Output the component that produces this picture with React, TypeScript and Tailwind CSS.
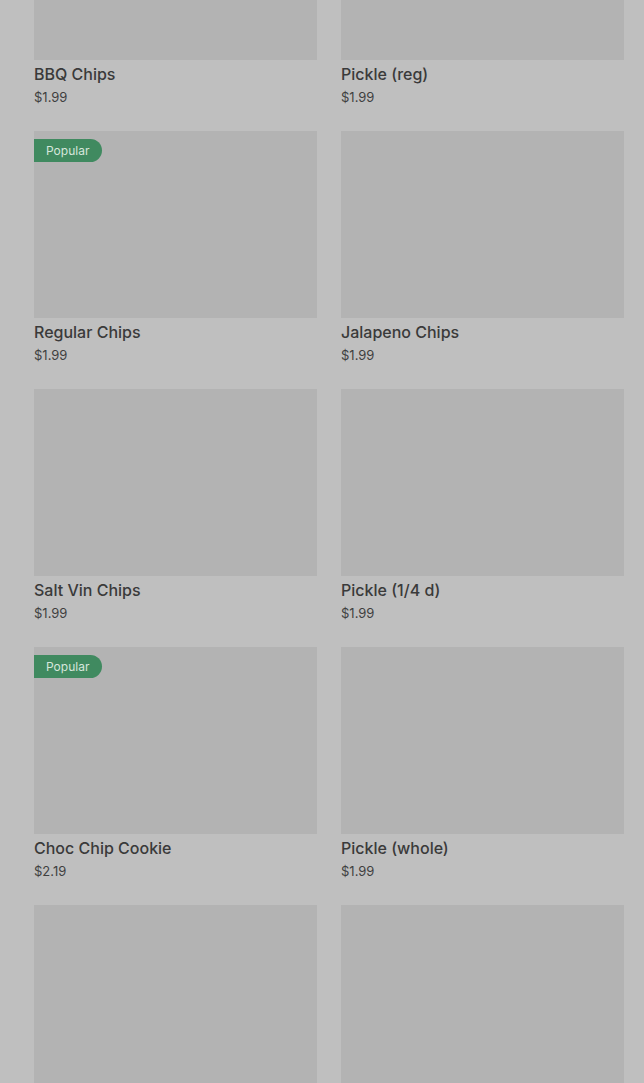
const items = [
  { name: 'BBQ Chips', price: '$1.99' },
  { name: 'Pickle (reg)', price: '$1.99' },
  { name: 'Regular Chips', price: '$1.99', popular: true },
  { name: 'Jalapeno Chips', price: '$1.99' },
  { name: 'Salt Vin Chips', price: '$1.99' },
  { name: 'Pickle (1/4 d)', price: '$1.99' },
  { name: 'Choc Chip Cookie', price: '$2.19', popular: true },
  { name: 'Pickle (whole)', price: '$1.99' },
];

function ItemCard({ name, price, popular }: { name?: string; price?: string; popular?: boolean }) {
  return (
    <div className="flex flex-col">
      <div className="relative h-[187px] bg-[#b3b3b3]">
        {popular && (
          <span className="absolute left-0 top-[8px] flex h-[23px] items-center rounded-r-full bg-[#408a60] pl-[12px] pr-[13px] text-[12px] text-[#d6e6dc]">
            Popular
          </span>
        )}
      </div>
      {name && (
        <>
          <div className="mt-[2px] text-[16px] leading-[24px] font-medium text-[#3a3a3a]">{name}</div>
          <div className="mt-[1px] text-[13px] leading-[20px] text-[#3f3f3f]">{price}</div>
        </>
      )}
    </div>
  );
}

export default function App() {
  return (
    <div
      className="h-[1083px] overflow-hidden bg-[#bfbfbf]"
      style={{ fontFamily: 'Inter, "Noto Sans", sans-serif' }}
    >
      <div className="-mt-[127px] grid grid-cols-2 gap-x-[24px] gap-y-[24px] pl-[34px] pr-[20px]">
        {items.map((item) => (
          <ItemCard key={item.name} {...item} />
        ))}
        <ItemCard />
        <ItemCard />
      </div>
    </div>
  );
}
